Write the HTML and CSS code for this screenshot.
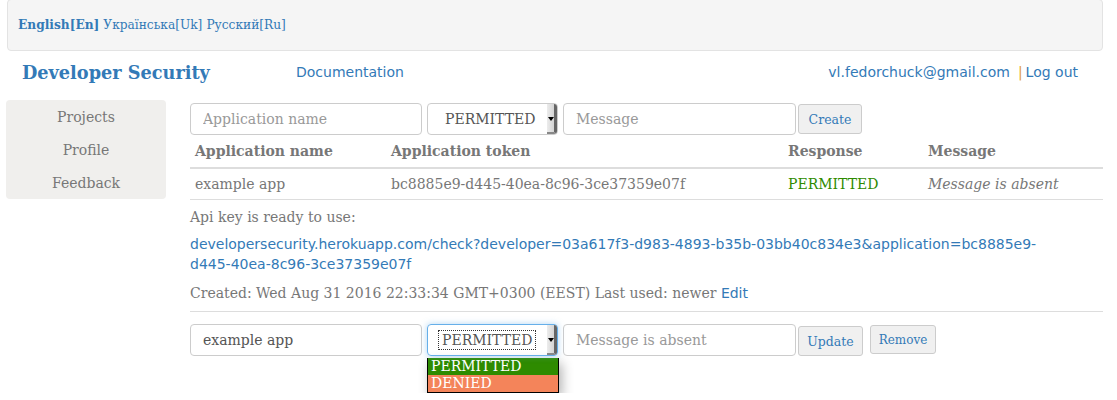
FILE: index.html
```html
<!DOCTYPE html>
<html>
<head>
<meta charset="utf-8">
<link rel="stylesheet" href="styles.css">
</head>
<body>
<div class="langbar">
  <a class="lang active">English[En]</a>
  <a class="lang">Українська[Uk]</a>
  <a class="lang">Русский[Ru]</a>
</div>
<div class="header">
  <div class="brand">Developer Security</div>
  <a class="doc">Documentation</a>
  <div class="user"><a>vl.fedorchuck@gmail.com</a><span class="sep">|</span><a>Log out</a></div>
</div>
<div class="layout">
  <nav class="sidebar">
    <a>Projects</a>
    <a>Profile</a>
    <a>Feedback</a>
  </nav>
  <main class="main">
    <div class="form">
      <input class="field name" placeholder="Application name">
      <div class="select-col">
        <div class="select"><span class="sel-text">PERMITTED</span><span class="sel-arrow"></span></div>
      </div>
      <input class="field message" placeholder="Message">
      <button class="btn create">Create</button>
    </div>
    <table class="apps">
      <thead>
        <tr><th class="c1">Application name</th><th class="c2">Application token</th><th class="c3">Response</th><th class="c4">Message</th></tr>
      </thead>
      <tbody>
        <tr><td>example app</td><td>bc8885e9-d445-40ea-8c96-3ce37359e07f</td><td class="ok">PERMITTED</td><td class="msg">Message is absent</td></tr>
      </tbody>
    </table>
    <p class="info">Api key is ready to use:</p>
    <p class="url"><a>developersecurity.herokuapp.com/check?developer=03a617f3-d983-4893-b35b-03bb40c834e3&amp;application=bc8885e9-d445-40ea-8c96-3ce37359e07f</a></p>
    <p class="info">Created: Wed Aug 31 2016 22:33:34 GMT+0300 (EEST) Last used: newer <a class="edit">Edit</a></p>
    <hr class="rule">
    <div class="form edit-form">
      <input class="field name" value="example app">
      <div class="select-col">
        <div class="select focus"><span class="sel-text dotted">PERMITTED</span><span class="sel-arrow"></span></div>
        <div class="choices">
          <div class="choice permitted">PERMITTED</div>
          <div class="choice denied">DENIED</div>
        </div>
      </div>
      <input class="field message" placeholder="Message is absent">
      <button class="btn update">Update</button>
      <button class="btn remove">Remove</button>
    </div>
  </main>
</div>
</body>
</html>
```
FILE: styles.css
```css
* { box-sizing: border-box; }
body {
  margin: 0;
  font-family: "DejaVu Serif", serif;
  font-size: 14px;
  color: #777;
  background: #fff;
}
a { color: #337ab7; text-decoration: none; }

.langbar {
  width: 1096px;
  height: 52px;
  margin: -1px 0 0 7px;
  background: #f5f5f5;
  border: 1px solid #e3e3e3;
  border-radius: 4px;
  display: flex;
  align-items: center;
  padding: 0 0 0 10px;
  font-size: 12.2px;
  gap: 4px;
}
.lang.active { font-weight: bold; }

.header {
  display: flex;
  align-items: center;
  height: 38px;
  margin-top: 2px;
  padding: 0 39px 0 22px;
}
.brand {
  font-size: 17.7px;
  font-weight: bold;
  color: #337ab7;
  width: 274px;
}
.doc, .user {
  font-family: "DejaVu Sans", sans-serif;
  font-size: 14px;
}
.user { margin-left: auto; }
.sep { color: #e0a040; margin: 0 3px 0 8px; }

.layout {
  display: flex;
  gap: 24px;
  padding: 9px 14px 0 6px;
}
.sidebar {
  width: 160px;
  height: 99px;
  flex: none;
  background: #f0efed;
  border-radius: 4px;
  display: flex;
  flex-direction: column;
  align-items: center;
  padding-top: 1px;
}
.sidebar a {
  color: #777;
  line-height: 33px;
}
.main { flex: 1; min-width: 0; }

.form {
  display: flex;
  align-items: center;
  gap: 5px;
  margin-top: 3px;
}
.form.edit-form { align-items: flex-start; margin-top: 0; }
.field {
  height: 32px;
  border: 1px solid #ccc;
  border-radius: 4px;
  padding: 6px 12px;
  font-family: "DejaVu Serif", serif;
  font-size: 14px;
  color: #555;
  background: #fff;
}
.field.name { width: 232px; }
.field.message { width: 233px; }
.field::placeholder { color: #999; }

.select-col { display: flex; flex-direction: column; align-items: flex-start; width: 131px; flex: none; }
.select {
  position: relative;
  width: 131px;
  height: 32px;
  border: 1px solid #ccc;
  border-radius: 4px;
  display: flex;
  align-items: center;
  padding-left: 14px;
  color: #555;
  font-size: 14px;
}
.select.focus {
  border-color: #66afe9;
  box-shadow: 0 0 6px rgba(102,175,233,.5);
}
.sel-text { padding: 1px 3px; }
.sel-text.dotted { outline: 1px dotted #333; margin-left: -3px; }
.sel-arrow {
  position: absolute;
  right: 0;
  top: 0;
  bottom: 0;
  width: 10px;
  background: linear-gradient(to right, #ececec, #d4d4d4);
  border-right: 3px solid #666;
  border-bottom: 2px solid #888;
  border-radius: 0 3px 3px 0;
}
.sel-arrow::after {
  content: "";
  position: absolute;
  left: 1px;
  top: 13px;
  border-left: 3px solid transparent;
  border-right: 3px solid transparent;
  border-top: 4px solid #000;
}
.choices {
  width: 132px;
  flex: none;
  margin-top: 2px;
  border: 1px solid #000;
  border-top: none;
  box-shadow: 3px 5px 12px rgba(0,0,0,.3);
  font-size: 14px;
}
.choice { color: #fff; line-height: 17px; padding-left: 3px; }
.choice.permitted { background: #2e8b00; }
.choice.denied { background: #f4845a; }

.btn {
  height: 30px;
  padding: 0;
  margin-left: -3px;
  border: 1px solid #ccc;
  border-radius: 3px;
  background: #f0f0f0;
  color: #337ab7;
  font-family: "DejaVu Serif", serif;
  font-size: 12.5px;
}
.btn.create { width: 64px; }
.btn.update { width: 65px; margin-top: 2px; }
.btn.remove { width: 66px; margin-left: 2px; font-size: 12px; height: 29px; margin-top: 1px; }

.apps {
  width: 100%;
  border-collapse: collapse;
}
.apps th {
  text-align: left;
  font-weight: bold;
  padding: 7px 5px;
  border-bottom: 2px solid #ddd;
  line-height: 18px;
}
.apps td {
  padding: 6px 5px;
  border-bottom: 1px solid #ddd;
  line-height: 18px;
}
.c1 { width: 196px; }
.c2 { width: 397px; }
.c3 { width: 140px; }
.ok { color: #2e8b00; }
.msg { font-style: italic; }

.info { margin: 7px 0 0; line-height: 20px; }
.url {
  margin: 7px 0 0;
  width: 870px;
  line-height: 20px;
  font-family: "DejaVu Sans", sans-serif;
  font-size: 14px;
}
.edit { font-family: "DejaVu Sans", sans-serif; }
.url + .info { margin-top: 9px; }
.rule {
  border: none;
  border-top: 1px solid #ddd;
  margin: 8px 0 12px;
}
```
